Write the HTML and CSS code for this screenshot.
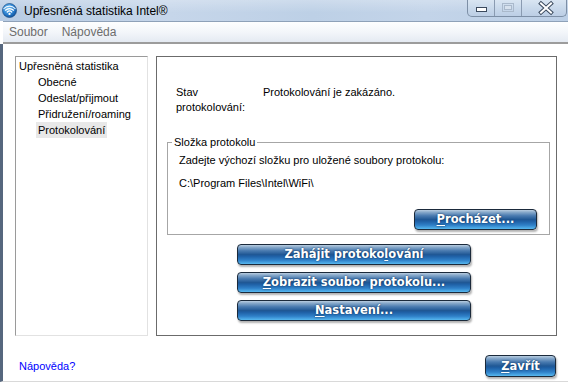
FILE: index.html
```html
<!DOCTYPE html>
<html lang="cs">
<head>
<meta charset="utf-8">
<title>Upřesněná statistika Intel®</title>
<link rel="stylesheet" href="styles.css">
</head>
<body>
<div class="window">
  <div class="titlebar">
    <svg class="appicon" viewBox="0 0 16 16" width="15" height="15">
      <defs>
        <radialGradient id="ig" cx="0.4" cy="0.35" r="0.7">
          <stop offset="0" stop-color="#7cc6f5"/>
          <stop offset="0.6" stop-color="#2a80d0"/>
          <stop offset="1" stop-color="#0f4f97"/>
        </radialGradient>
      </defs>
      <circle cx="8" cy="8" r="7.5" fill="url(#ig)" stroke="#0d3f78" stroke-width="0.6"/>
      <circle cx="8" cy="11.6" r="1.2" fill="#fff"/>
      <path d="M5.6 9.6 A3.4 3.4 0 0 1 10.4 9.6" fill="none" stroke="#fff" stroke-width="1.3" stroke-linecap="round"/>
      <path d="M3.7 7.7 A6 6 0 0 1 12.3 7.7" fill="none" stroke="#fff" stroke-width="1.3" stroke-linecap="round"/>
      <path d="M2 5.9 A8.4 8.4 0 0 1 14 5.9" fill="none" stroke="#fff" stroke-width="1.2" stroke-linecap="round" opacity="0.9"/>
    </svg>
    <span class="title">Upřesněná statistika Intel®</span>
    <div class="controls">
      <div class="ctl ctl-min">
        <svg viewBox="0 0 26 16" width="26" height="16"><rect x="8.5" y="7.5" width="10" height="4" fill="#fff" stroke="#3b4a5e" stroke-width="1"/></svg>
      </div>
      <div class="ctl ctl-max">
        <svg viewBox="0 0 26 16" width="26" height="16"><rect x="7.5" y="3.5" width="11" height="8" fill="none" stroke="#aab9cb" stroke-width="1"/><rect x="9.5" y="5.5" width="7" height="4" fill="#d7e2ee" stroke="#aab9cb" stroke-width="1"/></svg>
      </div>
      <div class="ctl ctl-close">
        <svg viewBox="0 0 44 16" width="44" height="16"><path d="M19 3.5 L29 12.5 M29 3.5 L19 12.5" stroke="#3b4a5e" stroke-width="4" stroke-linecap="square"/><path d="M19 3.5 L29 12.5 M29 3.5 L19 12.5" stroke="#fff" stroke-width="2" stroke-linecap="square"/></svg>
      </div>
    </div>
  </div>
  <div class="menubar">
    <span class="menu-item">Soubor</span>
    <span class="menu-item">Nápověda</span>
  </div>
  <div class="client">
    <div class="main">
      <div class="tree">
        <div class="tree-root">Upřesněná statistika</div>
        <div class="tree-children">
          <span class="tree-item">Obecné</span>
          <span class="tree-item">Odeslat/přijmout</span>
          <span class="tree-item">Přidružení/roaming</span>
          <span class="tree-item tree-item-selected">Protokolování</span>
        </div>
      </div>
      <div class="panel">
        <div class="status">
          <span class="status-label">Stav protokolování:</span>
          <span class="status-value">Protokolování je zakázáno.</span>
        </div>
        <fieldset class="group">
          <legend class="group-title">Složka protokolu</legend>
          <div class="group-body">
            <div class="group-line">Zadejte výchozí složku pro uložené soubory protokolu:</div>
            <div class="group-line path">C:\Program Files\Intel\WiFi\</div>
            <div class="browse-row">
              <button class="btn btn-browse"><u>P</u>rocházet...</button>
            </div>
          </div>
        </fieldset>
        <div class="actions">
          <button class="btn btn-wide">Zahájit protoko<u>l</u>ování</button>
          <button class="btn btn-wide"><u>Z</u>obrazit soubor protokolu...</button>
          <button class="btn btn-wide"><u>N</u>astavení...</button>
        </div>
      </div>
    </div>
    <div class="footer">
      <a class="help-link" href="#">Nápověda?</a>
      <button class="btn btn-close"><u>Z</u>avřít</button>
    </div>
  </div>
</div>
</body>
</html>
```
FILE: styles.css
```css
html, body {
  margin: 0;
  padding: 0;
}

body {
  width: 568px;
  height: 384px;
  overflow: hidden;
  font-family: "Liberation Sans", Arial, sans-serif;
  font-size: 11px;
  color: #000;
  background: #fff;
}

.window {
  box-sizing: border-box;
  height: 384px;
  display: flex;
  flex-direction: column;
  padding-bottom: 2px;
  background: #fff;
}

/* ---------- title bar ---------- */
.titlebar {
  height: 21px;
  flex: none;
  display: flex;
  align-items: flex-start;
  background:
    linear-gradient(180deg, rgba(255,255,255,0.25) 0%, rgba(255,255,255,0) 60%),
    linear-gradient(90deg, #b7cbe3 0%, #c6d6ea 30%, #bdd0e6 55%, #c3d4e9 75%, #bccfe6 100%);
}

.appicon {
  flex: none;
  margin: 3px 0 0 2px;
}

.title {
  margin-left: 7px;
  font-size: 12px;
  line-height: 22px;
  color: #000;
}

.controls {
  margin-left: auto;
  margin-right: 1px;
  display: flex;
  height: 17px;
  box-sizing: border-box;
  border: 1px solid #7d8fa6;
  border-top: none;
  border-radius: 0 0 5px 5px;
  overflow: hidden;
  background: linear-gradient(180deg, #d9e5f2 0%, #c9d9eb 50%, #bccee5 100%);
}

.ctl {
  display: flex;
  height: 16px;
}

.ctl-min,
.ctl-max {
  width: 26px;
  border-right: 1px solid #8a9bb1;
}

.ctl-close {
  width: 44px;
}

/* ---------- menu bar ---------- */
.menubar {
  flex: none;
  height: 20px;
  display: flex;
  gap: 14px;
  margin-left: 3px;
  padding-left: 6px;
  font-size: 12px;
  line-height: 20px;
  color: #6d6d6d;
  background: linear-gradient(180deg, #fdfeff 0%, #f3f6fa 50%, #e4eaf2 100%);
  border-top: 1px solid #8ea1b8;
  border-bottom: 2px solid #9c9c9c;
}

/* ---------- client ---------- */
.client {
  flex: 1;
  display: flex;
  flex-direction: column;
  padding: 12px 11px 0 12px;
  border-left: 3px solid #56677e;
  border-bottom: 1px solid #d9d9d9;
}

.main {
  display: flex;
  gap: 8px;
  height: 280px;
}

/* ---------- tree ---------- */
.tree {
  box-sizing: border-box;
  width: 133px;
  border-style: solid;
  border-width: 1px;
  border-color: #9a9a9a #e2e2e2 #e2e2e2 #9a9a9a;
  padding: 1px 0 0 3px;
  line-height: 16px;
  background: #fff;
}

.tree-children {
  display: flex;
  flex-direction: column;
  align-items: flex-start;
  padding-left: 17px;
}

.tree-item {
  padding: 0 2px;
}

.tree-item-selected {
  background: #e8e8e8;
}

/* ---------- panel ---------- */
.panel {
  box-sizing: border-box;
  width: 401px;
  border: 1px solid #6b6b6b;
  padding: 28px 6px 0 10px;
  display: flex;
  flex-direction: column;
}

.status {
  display: grid;
  grid-template-columns: 87px auto;
  padding-left: 9px;
  line-height: 15px;
}

.status-label {
  width: 70px;
}

.group {
  margin: 20px 0 0 0;
  padding: 0;
  border: 1px solid #a6a6a6;
  min-width: 0;
}

.group-title {
  margin-left: 4px;
  padding: 0 2px;
  line-height: 15px;
}

.group-body {
  padding: 3px 12px 4px 11px;
  line-height: 15px;
}

.group-line.path {
  margin-top: 8px;
}

.browse-row {
  display: flex;
  justify-content: flex-end;
  margin-top: 18px;
}

.actions {
  display: flex;
  flex-direction: column;
  align-items: flex-start;
  gap: 7px;
  margin: 9px 0 0 70px;
}

/* ---------- buttons ---------- */
.btn {
  box-sizing: border-box;
  height: 21px;
  padding: 0;
  border: 1px solid #1b2a3b;
  border-radius: 4px;
  font-family: "DejaVu Sans", Verdana, sans-serif;
  font-weight: bold;
  font-size: 11.5px;
  line-height: 19px;
  color: #fff;
  text-align: center;
  text-shadow: 0 0 2px #0b2c55;
  background: linear-gradient(180deg,
    #b9cde0 0%,
    #86a8ca 12%,
    #4a7bb0 30%,
    #205895 50%,
    #1e5ea3 58%,
    #2f80c8 80%,
    #56b8f0 100%);
  box-shadow: 1px 2px 2px rgba(0, 0, 0, 0.3);
}

.btn u {
  text-decoration-thickness: 1px;
  text-underline-offset: 2px;
}

.btn-browse {
  width: 123px;
}

.btn-wide {
  width: 234px;
}

.btn-close {
  width: 71px;
  height: 22px;
  line-height: 20px;
  margin-right: 1px;
}

/* ---------- footer ---------- */
.footer {
  display: flex;
  justify-content: space-between;
  align-items: center;
  margin-top: 19px;
  padding-left: 4px;
}

.help-link {
  color: #0000ff;
  text-decoration: none;
  line-height: 15px;
}
```
